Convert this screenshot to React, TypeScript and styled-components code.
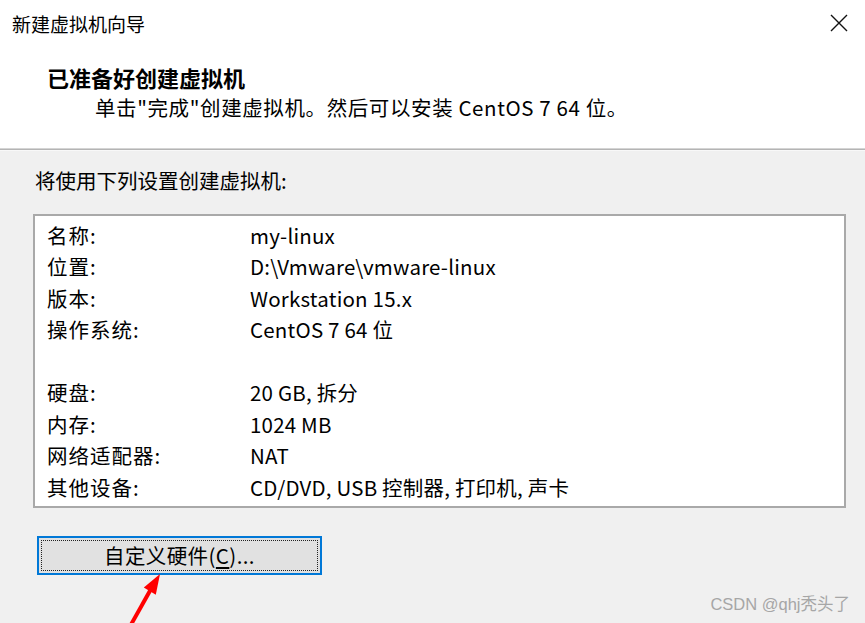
import React from "react";
import styled, { createGlobalStyle } from "styled-components";

const Global = createGlobalStyle`
  html, body { margin: 0; padding: 0; background: #f0f0f0; }
  body { font-family: "Noto Sans CJK SC", "Noto Sans", sans-serif; color: #000; }
  * { box-sizing: border-box; }
`;

const Window = styled.div`
  position: relative;
  width: 865px;
  height: 623px;
  overflow: hidden;
  background: #f0f0f0;
  display: flex;
  flex-direction: column;
`;

const Header = styled.div`
  height: 148px;
  background: #ffffff;
  display: flex;
  flex-direction: column;
`;

const TitleBar = styled.div`
  height: 46px;
  display: flex;
  align-items: center;
  justify-content: space-between;
  padding: 0 14px 0 12px;
`;

const TitleText = styled.span`
  font-size: 19px;
  line-height: 1;
`;

const CloseButton = styled.div`
  width: 24px;
  height: 24px;
  display: flex;
  align-items: center;
  justify-content: center;
`;

const Heading = styled.div`
  margin: 17px 0 0 47px;
  font-size: 22px;
  font-weight: 700;
  line-height: 28px;
  height: 28px;
`;

const Subtitle = styled.div`
  margin: 3px 0 0 95px;
  font-size: 20.5px;
  letter-spacing: 0.6px;
  line-height: 26px;
`;

const Separator = styled.div`
  height: 3px;
  border-top: 1px solid #d4d4d4;
  border-bottom: 1px solid #f8f8f8;
  background: #b4b4b4;
`;

const Body = styled.div`
  padding: 16px 19px 0 33px;
  display: flex;
  flex-direction: column;
`;

const Intro = styled.div`
  margin-left: 2px;
  font-size: 20.5px;
  line-height: 26px;
`;

const SummaryBox = styled.div`
  margin-top: 21px;
  height: 294px;
  background: #ffffff;
  border: 2px solid #a9a9a9;
  padding: 3px 12px 0 12px;
  display: grid;
  grid-template-columns: 203px 1fr;
  grid-auto-rows: 31.5px;
  align-items: center;
`;

const Cell = styled.div<{ $label?: boolean }>`
  font-size: 20.5px;
  letter-spacing: ${(p) => (p.$label ? "1px" : "0.2px")};
  line-height: 24px;
  white-space: nowrap;
`;

const ButtonRow = styled.div`
  margin-top: 28px;
  display: flex;
`;

const HardwareButton = styled.button`
  margin-left: 4px;
  width: 285px;
  height: 39px;
  background: #e1e1e1;
  border: 2px solid #0078d7;
  padding: 2px;
  font-family: inherit;
  display: flex;
`;

const FocusRing = styled.span`
  flex: 1;
  display: flex;
  align-items: center;
  justify-content: center;
  border: 1px dotted #222;
  font-size: 20.5px;
  letter-spacing: 0.4px;
  color: #000;
  line-height: 1;
`;

const Mnemonic = styled.span`
  text-decoration: underline;
  text-underline-offset: 3px;
`;

const Overlay = styled.svg`
  position: absolute;
  left: 0;
  top: 0;
  pointer-events: none;
`;

const Watermark = styled.div`
  position: absolute;
  right: 15px;
  bottom: 8px;
  font-family: "Liberation Sans", "Noto Sans CJK SC", sans-serif;
  font-size: 16.5px;
  color: #a6a6a6;
`;

const rows: [string, string][] = [
  ["名称:", "my-linux"],
  ["位置:", "D:\\Vmware\\vmware-linux"],
  ["版本:", "Workstation 15.x"],
  ["操作系统:", "CentOS 7 64 位"],
  ["", ""],
  ["硬盘:", "20 GB, 拆分"],
  ["内存:", "1024 MB"],
  ["网络适配器:", "NAT"],
  ["其他设备:", "CD/DVD, USB 控制器, 打印机, 声卡"],
];

export default function App() {
  return (
    <>
      <Global />
      <Window>
        <Header>
          <TitleBar>
            <TitleText>新建虚拟机向导</TitleText>
            <CloseButton>
              <svg width="18" height="18" viewBox="0 0 18 18">
                <path d="M1 1 L17 17 M17 1 L1 17" stroke="#111" strokeWidth="1.4" />
              </svg>
            </CloseButton>
          </TitleBar>
          <Heading>已准备好创建虚拟机</Heading>
          <Subtitle>单击"完成"创建虚拟机。然后可以安装 CentOS 7 64 位。</Subtitle>
        </Header>
        <Separator />
        <Body>
          <Intro>将使用下列设置创建虚拟机:</Intro>
          <SummaryBox>
            {rows.map(([k, v], i) => (
              <React.Fragment key={i}>
                <Cell $label>{k}</Cell>
                <Cell>{v}</Cell>
              </React.Fragment>
            ))}
          </SummaryBox>
          <ButtonRow>
            <HardwareButton>
              <FocusRing>
                自定义硬件(<Mnemonic>C</Mnemonic>)...
              </FocusRing>
            </HardwareButton>
          </ButtonRow>
        </Body>
        <Overlay width="865" height="623" viewBox="0 0 865 623">
          <line x1="128" y1="630" x2="151" y2="589" stroke="#ff0000" strokeWidth="4" />
          <polygon points="160,574 143.8,587.6 155.8,594.8" fill="#ff0000" />
        </Overlay>
        <Watermark>CSDN @qhj秃头了</Watermark>
      </Window>
    </>
  );
}
